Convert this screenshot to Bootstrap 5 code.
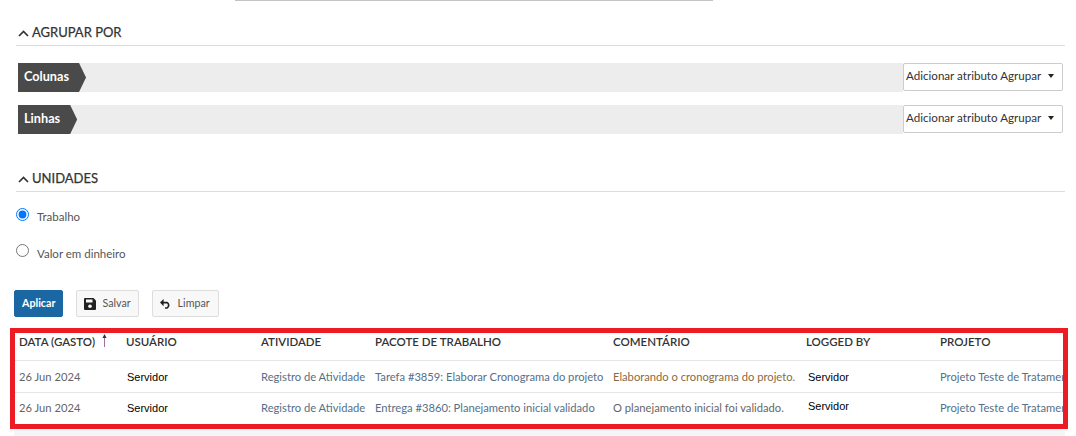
<!DOCTYPE html>
<html lang="pt">
<head>
<meta charset="utf-8">
<title>Relatório</title>
<link href="https://cdn.jsdelivr.net/npm/bootstrap@5.3.0/dist/css/bootstrap.min.css" rel="stylesheet">
<style>
html,body{height:436px;overflow:hidden;}
body{background:#fff;font-family:Lato,"Liberation Sans",sans-serif;font-size:12px;color:#333;}
.top-rule{width:478px;height:1px;background:#c4c4c4;margin-left:235px;}
.sect-head{margin:24px 11px 0 16px;height:20px;border-bottom:1px solid #ddd;font-size:13px;color:#333;display:flex;align-items:flex-start;gap:3px;line-height:15px;box-sizing:content-box;-webkit-text-stroke:.25px #333;}
.sect-head svg{margin:5px 0 0 2px;}
.group-row{margin:0 13px 0 18px;display:flex;height:29px;}
.group-row+.group-row{margin-top:13px;}
.first-row{margin-top:17px;}
.group-track{flex:1;background:#ededed;}
.group-tag{display:inline-flex;align-items:center;height:29px;background:#4a4a4a;color:#fff;font-weight:700;font-size:12.7px;padding:0 17px 2px 6px;clip-path:polygon(0 0,calc(100% - 7px) 0,100% 50%,calc(100% - 7px) 100%,0 100%);}
.group-select{width:160px;height:28px;background:#fff;border:1px solid #ccc;border-radius:2px;display:flex;align-items:center;justify-content:space-between;padding:0 8px 2px 2px;font-size:11.6px;color:#333;white-space:nowrap;}
.caret-down{width:0;height:0;border-left:3.5px solid transparent;border-right:3.5px solid transparent;border-top:4px solid #222;}
.units{margin:0 0 0 16px;}
.radio-line{display:flex;align-items:center;gap:8px;color:#555;height:18px;font-size:11.5px;}
.radio-line input{appearance:auto;width:13px;height:13px;margin:0 0 6px 0;flex:none;accent-color:#0075ff;}
.radio-low input{margin-bottom:8px;}
.actions{margin:0 0 0 14px;gap:13px;display:flex;}
.act{height:27px;font-size:10.7px;border-radius:2px;padding:0 7px;display:inline-flex;align-items:center;line-height:1;}
.act-primary{background:#1a67a3;border:1px solid #1a67a3;color:#fff;font-weight:700;}
.act-light{background:#f8f8f8;border:1px solid #ddd;color:#555;gap:6px;}
.act-wide{padding-right:8px;}
.frame{margin:11px 8px 0 10px;border:5px solid #ed1c24;height:101px;overflow:hidden;background:#fff;}
.log-table{table-layout:fixed;width:1120px;margin:0;font-size:11.2px;border-collapse:collapse;}
.log-table th{height:27px;padding:0 0 9px 4px;font-size:11.5px;color:#333;border-bottom:1px solid #e6e6e6;white-space:nowrap;vertical-align:middle;font-weight:600;}
.log-table td{height:32px;padding:3px 0 0 4px;border-bottom:1px solid #e6e6e6;white-space:nowrap;overflow:hidden;color:#666;vertical-align:middle;}
.log-table tr:last-child td{border-bottom:0;padding-top:0;}
.log-table td.lnk{color:#566f88;}
.log-table td.cmt{color:#8a6a3f;}
.log-table td.srv{font-family:"Liberation Sans",sans-serif;font-size:11px;color:#000;padding-left:5px;padding-top:3px;}
.log-table td.srv-by{padding-left:6px;}
.log-table tr:last-child td.srv{padding-top:0;}
.log-table tr:last-child td.srv-by{padding-bottom:4px;}
.foot-strip{margin:0 11px 0 14px;height:7px;background:#f4f5f7;}
</style>
</head>
<body>
<div class="top-rule"></div>

<div class="sect-head"><svg width="11" height="7" viewBox="0 0 11 7"><path d="M1 6 5.5 1.5 10 6" fill="none" stroke="#333" stroke-width="1.7"/></svg>AGRUPAR POR</div>
<div class="group-row first-row">
  <div class="group-track"><span class="group-tag">Colunas</span></div>
  <div class="group-select"><span>Adicionar atributo Agrupar</span><span class="caret-down"></span></div>
</div>
<div class="group-row">
  <div class="group-track"><span class="group-tag">Linhas</span></div>
  <div class="group-select"><span>Adicionar atributo Agrupar</span><span class="caret-down"></span></div>
</div>

<div class="sect-head" style="margin-top:37px"><svg width="11" height="7" viewBox="0 0 11 7"><path d="M1 6 5.5 1.5 10 6" fill="none" stroke="#333" stroke-width="1.7"/></svg>UNIDADES</div>

<div class="units">
  <label class="radio-line" style="margin-top:16px"><input type="radio" name="u" checked>Trabalho</label>
  <label class="radio-line radio-low" style="margin-top:19px"><input type="radio" name="u">Valor em dinheiro</label>
</div>

<div class="actions" style="margin-top:27px">
  <button type="button" class="act act-primary">Aplicar</button>
  <button type="button" class="act act-light"><svg width="12" height="12" viewBox="0 0 12 12"><path fill="#222" d="M0 1a1 1 0 0 1 1-1h8.5L12 2.5V11a1 1 0 0 1-1 1H1a1 1 0 0 1-1-1z"/><rect x="2" y="1.5" width="6.5" height="3" fill="#f8f8f8"/><circle cx="6" cy="8.3" r="1.8" fill="#f8f8f8"/></svg>Salvar</button>
  <button type="button" class="act act-light act-wide"><svg width="12" height="10" viewBox="0 0 12 10"><path fill="none" stroke="#222" stroke-width="1.7" d="M2.2 3.6H7a3 3 0 0 1 0 5.4H5"/><path fill="#222" d="M0 3.6 3.6 0v7.2z"/></svg>Limpar</button>
</div>

<div class="frame">
  <table class="log-table">
    <colgroup><col style="width:107px"><col style="width:135px"><col style="width:114px"><col style="width:238px"><col style="width:193px"><col style="width:134px"><col style="width:199px"></colgroup>
    <thead>
      <tr>
        <th>DATA (GASTO) <svg width="7" height="13" viewBox="0 0 7 13" style="vertical-align:-1px;margin-left:3px"><path d="M3.5 3v10" stroke="#a070a0" stroke-width="1"/><path d="M3.5 0 5.5 4h-4z" fill="#333"/></svg></th>
        <th>USUÁRIO</th><th>ATIVIDADE</th><th>PACOTE DE TRABALHO</th><th>COMENTÁRIO</th><th>LOGGED BY</th><th>PROJETO</th>
      </tr>
    </thead>
    <tbody>
      <tr><td>26 Jun 2024</td><td class="srv">Servidor</td><td class="lnk">Registro de Atividade</td><td class="lnk">Tarefa #3859: Elaborar Cronograma do projeto</td><td class="cmt">Elaborando o cronograma do projeto.</td><td class="srv srv-by">Servidor</td><td class="lnk">Projeto Teste de Tratamento</td></tr>
      <tr><td>26 Jun 2024</td><td class="srv">Servidor</td><td class="lnk">Registro de Atividade</td><td class="lnk">Entrega #3860: Planejamento inicial validado</td><td>O planejamento inicial foi validado.</td><td class="srv srv-by">Servidor</td><td class="lnk">Projeto Teste de Tratamento</td></tr>
    </tbody>
  </table>
</div>
<div class="foot-strip"></div>
</body>
</html>
